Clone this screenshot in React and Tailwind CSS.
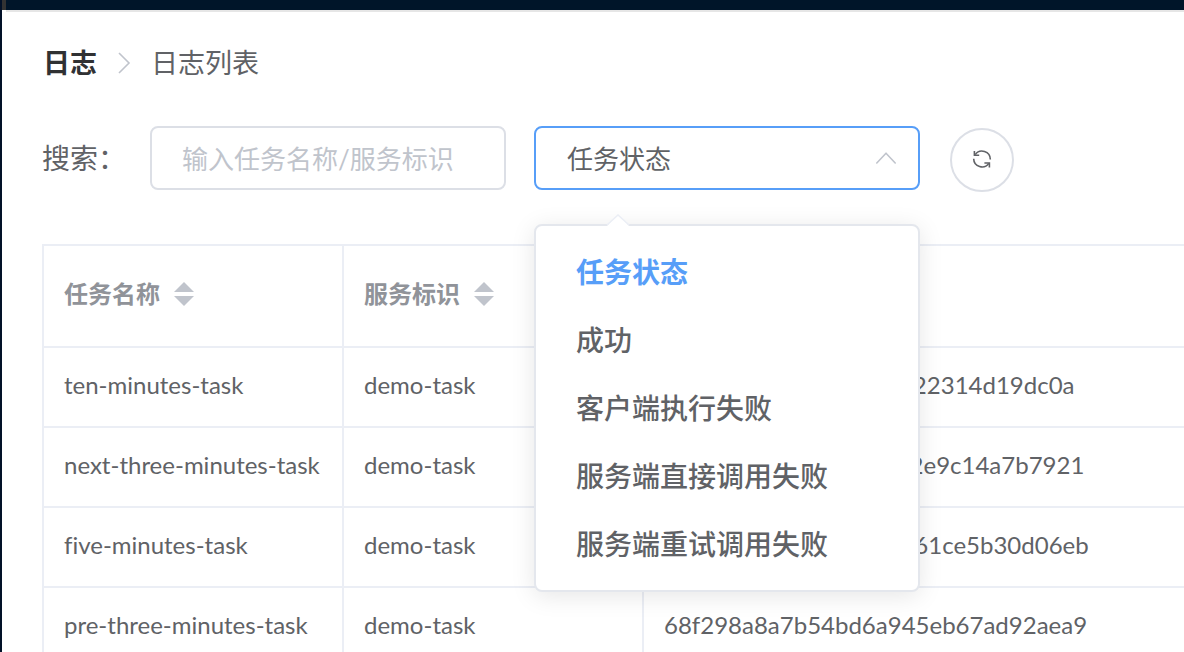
import { useState } from 'react';

const statuses = ['任务状态', '成功', '客户端执行失败', '服务端直接调用失败', '服务端重试调用失败'];

const rows = [
  { name: 'ten-minutes-task', service: 'demo-task', id: '4c7e1faf5b9d8fe6c2a722314d19dc0a' },
  { name: 'next-three-minutes-task', service: 'demo-task', id: '3df5e8f4a6c9127de802e9c14a7b7921' },
  { name: 'five-minutes-task', service: 'demo-task', id: 'a277d40e6b8f135a9c361ce5b30d06eb' },
  { name: 'pre-three-minutes-task', service: 'demo-task', id: '68f298a8a7b54bd6a945eb67ad92aea9' },
];

function SortIcon() {
  return (
    <svg width="20" height="24" viewBox="0 0 20 24" fill="#c0c4cc" aria-hidden="true">
      <path d="M10 0l10 10H0z" />
      <path d="M0 14h20L10 24z" />
    </svg>
  );
}

function RefreshIcon() {
  return (
    <svg width="20" height="20" viewBox="0 0 20 20" fill="none" stroke="#606266" strokeWidth="1.6" aria-hidden="true">
      <path d="M3.2 4.6A8.3 8.3 0 0 1 18.3 9.4" />
      <path d="M16.8 13.4A8.3 8.3 0 0 1 1.7 8.8" />
      <path d="M2.4 1v4.2h4.8" />
      <path d="M17.4 17.4v-4.4h-5" />
    </svg>
  );
}

function StatusSelect() {
  const [value, setValue] = useState(statuses[0]);
  return (
    <div className="relative w-[386px] shrink-0">
      <select
        aria-label="任务状态"
        value={value}
        onChange={(e) => setValue(e.target.value)}
        className="block h-16 w-full appearance-none rounded-lg border-2 border-[#579ef8] bg-white px-[31px] pt-0.5 text-[26px] text-[#606266] outline-none"
      >
        {statuses.map((s) => (
          <option key={s}>{s}</option>
        ))}
      </select>
      <svg className="pointer-events-none absolute top-6 right-6" width="20" height="16" viewBox="0 0 20 16" fill="none" stroke="#c0c4cc" strokeWidth="1.6" strokeLinecap="round" strokeLinejoin="round" aria-hidden="true">
        <path d="M0.8 13l9.2-9.8 9.2 9.8" />
      </svg>
      <div className="absolute top-[98px] left-0 z-10 w-full rounded-lg border-2 border-[#e4e7ed] bg-white py-3 shadow-[0_4px_24px_rgba(0,0,0,0.1)]">
        <svg className="absolute -top-3 left-[70px]" width="24" height="13" viewBox="0 0 24 13" aria-hidden="true">
          <path d="M0 13L12 1l12 12z" fill="#fff" />
          <path d="M1 11L12 1l11 10" fill="none" stroke="#ebeef5" strokeWidth="1.5" />
        </svg>
        <ul>
          {statuses.map((s) => (
            <li key={s}>
              <button
                type="button"
                onClick={() => setValue(s)}
                className={
                  s === value
                    ? 'block h-[68px] w-full px-10 text-left text-[28px] font-bold text-[#579ef8]'
                    : 'block h-[68px] w-full px-10 text-left text-[28px] font-medium text-[#606266]'
                }
              >
                {s}
              </button>
            </li>
          ))}
        </ul>
      </div>
    </div>
  );
}

function HeaderCell({ children, className }) {
  return (
    <th className={`h-[102px] border-r-2 border-b-2 border-[#ebeef5] px-5 pb-1 text-left text-[24px] font-bold text-[#909399] ${className}`}>
      <button type="button" className="flex items-center gap-3.5">
        {children}
        <SortIcon />
      </button>
    </th>
  );
}

export default function App() {
  return (
    <div className="flex h-screen overflow-hidden bg-white font-[Lato,'Noto_Sans_CJK_SC',sans-serif] text-[#606266] [font-variant-ligatures:none]">
      <div className="w-0.5 shrink-0 bg-[#021128]" />
      <div className="min-w-0 flex-1">
        <header className="flex h-3">
          <div className="h-2.5 w-1 bg-[#333333]" />
          <div className="flex-1 border-b-2 border-[#e6e6e6] bg-[#001529]" />
        </header>
        <main className="pl-10">
          <nav className="flex h-[102px] items-center pl-px text-[27px]">
            <a href="#logs" className="font-bold text-[#303133]">日志</a>
            <svg className="mx-5" width="14" height="22" viewBox="0 0 14 22" fill="none" stroke="#c0c4cc" strokeWidth="1.6" aria-hidden="true">
              <path d="M2 1l10 10L2 21" />
            </svg>
            <span>日志列表</span>
          </nav>
          <div className="flex items-start pt-3">
            <label htmlFor="keyword" className="w-[108px] shrink-0 text-[28px] leading-[64px]">搜索：</label>
            <input
              id="keyword"
              type="text"
              placeholder="输入任务名称/服务标识"
              className="mr-7 h-16 w-[356px] rounded-lg border-2 border-[#dcdfe6] px-[30px] pt-0.5 text-[26px] outline-none placeholder:text-[#c0c4cc]"
            />
            <StatusSelect />
            <button type="button" aria-label="刷新" className="mt-0.5 ml-[30px] flex h-16 w-16 shrink-0 items-center justify-center rounded-full border-2 border-[#dcdfe6]">
              <RefreshIcon />
            </button>
          </div>
          <table className="mt-[52px] w-full table-fixed border-separate border-spacing-0 border-t-2 border-l-2 border-[#ebeef5]">
            <thead>
              <tr>
                <HeaderCell className="w-[300px]">任务名称</HeaderCell>
                <HeaderCell className="w-[300px]">服务标识</HeaderCell>
                <th className="border-b-2 border-[#ebeef5]" />
              </tr>
            </thead>
            <tbody className="text-[24px]">
              {rows.map((r) => (
                <tr key={r.name}>
                  <td className="h-20 border-r-2 border-b-2 border-[#ebeef5] px-5 pb-1 whitespace-nowrap">{r.name}</td>
                  <td className="border-r-2 border-b-2 border-[#ebeef5] px-5 pb-1">{r.service}</td>
                  <td className="border-b-2 border-[#ebeef5] px-5 pb-1">{r.id}</td>
                </tr>
              ))}
            </tbody>
          </table>
        </main>
      </div>
    </div>
  );
}
